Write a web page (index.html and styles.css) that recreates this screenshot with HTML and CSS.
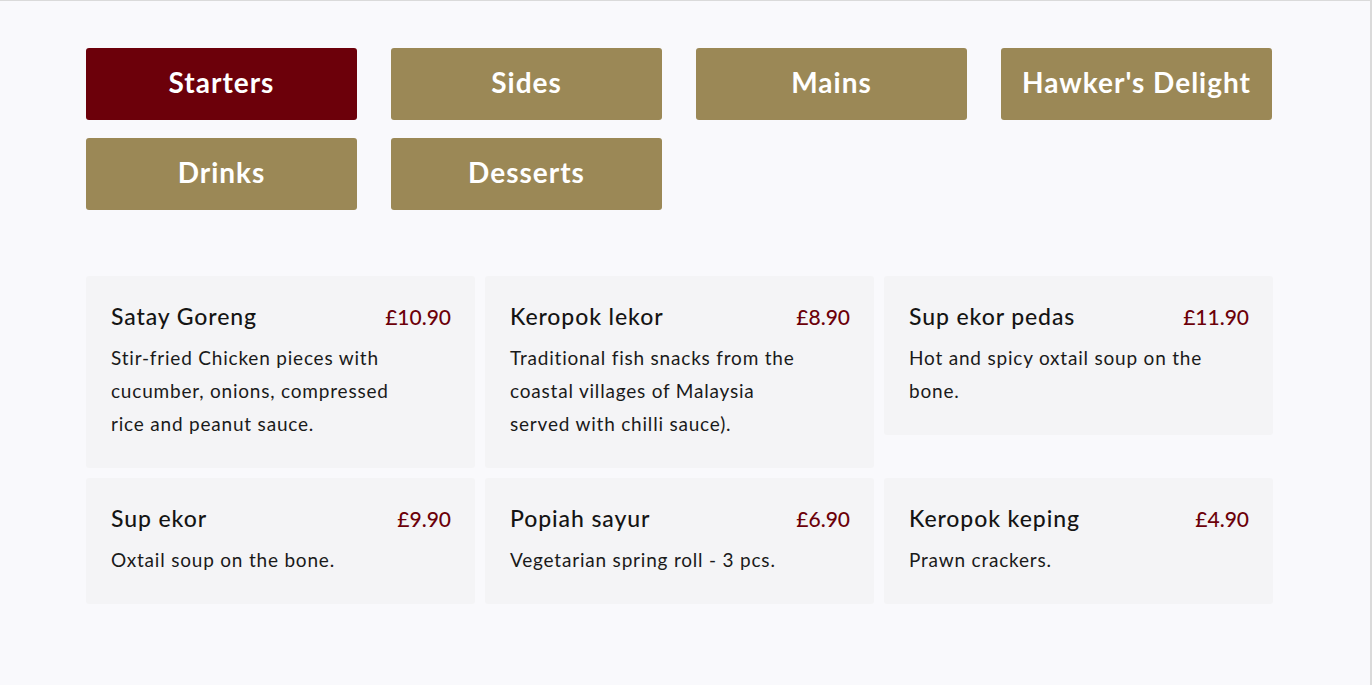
FILE: index.html
```html
<!DOCTYPE html>
<html lang="en">
<head>
<meta charset="utf-8">
<title>Menu</title>
<link rel="stylesheet" href="styles.css">
</head>
<body>
<main class="page">
  <nav class="tabs">
    <button class="tab tab-active">Starters</button>
    <button class="tab">Sides</button>
    <button class="tab">Mains</button>
    <button class="tab">Hawker's Delight</button>
    <button class="tab">Drinks</button>
    <button class="tab">Desserts</button>
  </nav>
  <section class="menu">
    <article class="item">
      <div class="item-head"><h3 class="item-name">Satay Goreng</h3><span class="item-price">£10.90</span></div>
      <p class="item-desc">Stir-fried Chicken pieces with cucumber, onions, compressed rice and peanut sauce.</p>
    </article>
    <article class="item">
      <div class="item-head"><h3 class="item-name">Keropok lekor</h3><span class="item-price">£8.90</span></div>
      <p class="item-desc">Traditional fish snacks from the coastal villages of Malaysia served with chilli sauce).</p>
    </article>
    <article class="item">
      <div class="item-head"><h3 class="item-name">Sup ekor pedas</h3><span class="item-price">£11.90</span></div>
      <p class="item-desc">Hot and spicy oxtail soup on the bone.</p>
    </article>
    <article class="item">
      <div class="item-head"><h3 class="item-name">Sup ekor</h3><span class="item-price">£9.90</span></div>
      <p class="item-desc">Oxtail soup on the bone.</p>
    </article>
    <article class="item">
      <div class="item-head"><h3 class="item-name">Popiah sayur</h3><span class="item-price">£6.90</span></div>
      <p class="item-desc">Vegetarian spring roll - 3 pcs.</p>
    </article>
    <article class="item">
      <div class="item-head"><h3 class="item-name">Keropok keping</h3><span class="item-price">£4.90</span></div>
      <p class="item-desc">Prawn crackers.</p>
    </article>
  </section>
</main>
</body>
</html>
```
FILE: styles.css
```css
html {
  background: #f9f9fc;
}
body {
  margin: 0;
  min-height: 685px;
  box-sizing: border-box;
  border-top: 1px solid #dadada;
  border-right: 2px solid #dadada;
  font-family: Lato, "Open Sans", sans-serif;
  color: #161616;
}
.page {
  width: 1187px;
  padding: 47px 0 0 86px;
}
.tabs {
  display: grid;
  grid-template-columns: repeat(4, 271px);
  column-gap: 34px;
  row-gap: 18px;
}
.tab {
  height: 72px;
  border: 0;
  border-radius: 3px;
  background: #9b8856;
  color: #ffffff;
  font-family: Lato, sans-serif;
  font-weight: 700;
  font-size: 28px;
  letter-spacing: 1px;
  padding: 0 0 4px;
  cursor: pointer;
}
.tab-active {
  background: #6c000a;
}
.menu {
  margin-top: 66px;
  display: grid;
  grid-template-columns: repeat(3, 1fr);
  gap: 10px;
  align-items: start;
}
.item {
  background: #f4f4f6;
  border-radius: 3px;
  padding: 24px 24px 28px 25px;
}
.item-head {
  display: flex;
  justify-content: space-between;
  align-items: baseline;
  height: 32px;
}
.item-name {
  margin: 0;
  font-size: 23px;
  line-height: 32px;
  font-weight: 500;
  letter-spacing: 0.9px;
  color: #141414;
}
.item-price {
  font-size: 21px;
  line-height: 32px;
  font-weight: 500;
  color: #6c0009;
}
.item-desc {
  margin: 9px 0 0;
  max-width: 300px;
  font-size: 19px;
  line-height: 33px;
  letter-spacing: 0.8px;
  color: #1a1a1a;
}
```
